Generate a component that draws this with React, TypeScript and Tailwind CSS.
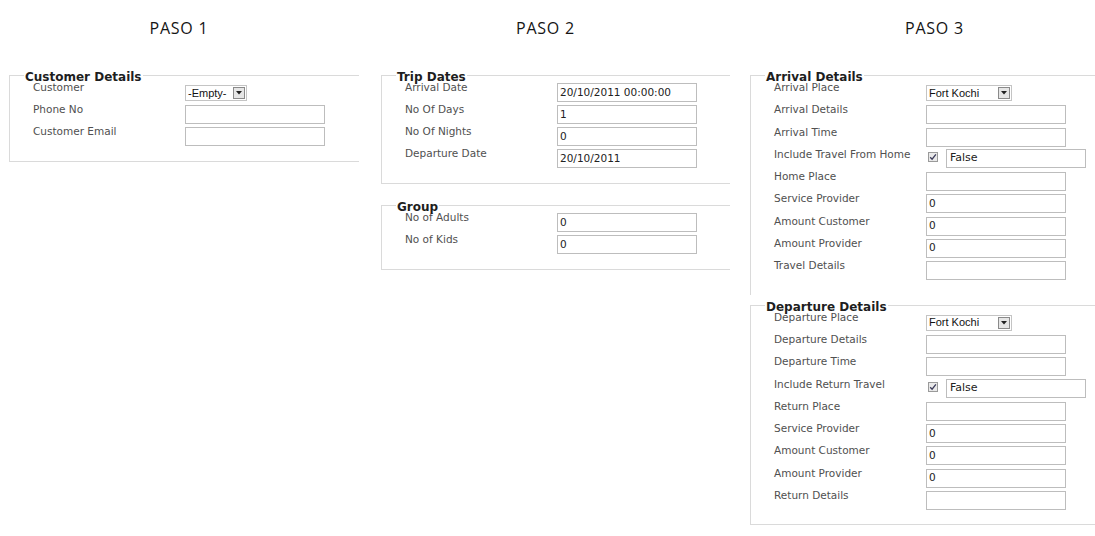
const UI = "font-['DejaVu_Sans',Verdana,sans-serif]";

function Field({
  legend,
  className,
  children,
}: {
  legend: string;
  className: string;
  children: React.ReactNode;
}) {
  return (
    <fieldset className={`border border-r-0 border-[#dadada] pl-[14px] ${className}`}>
      <legend className="px-[1px] text-[12px] leading-[15px] font-bold text-[#1e1e1e]">
        <span className="relative top-[2px]">{legend}</span>
      </legend>
      <div className="pl-[9px]">{children}</div>
    </fieldset>
  );
}

function Row({ label, h, children }: { label: string; h: string; children?: React.ReactNode }) {
  return (
    <div className={`flex items-start ${h}`}>
      <span className="-mt-[3px] w-[152px] shrink-0 text-[10.5px] leading-[14px] text-[#505050]">{label}</span>
      {children}
    </div>
  );
}

function TextBox({ value = "" }: { value?: string }) {
  return (
    <div className="flex h-[19px] w-[140px] items-center border border-[#bdbdbd] bg-white pl-[2px] text-[10.5px] text-[#222]">
      {value}
    </div>
  );
}

function Dropdown({ value, w }: { value: string; w: string }) {
  return (
    <div
      className={`mt-[2px] flex h-[16px] items-center border border-[#c4c4c4] bg-white pr-[1px] pl-[2px] font-['Liberation_Sans',Arial,sans-serif] text-[11px] text-[#111] ${w}`}
    >
      <span className="flex-1 leading-none">{value}</span>
      <span className="flex h-[12px] w-[12px] items-center justify-center border border-[#8a8a8a] bg-[#e6e6e6]">
        <svg width="6" height="4" viewBox="0 0 6 4">
          <path d="M0 0H6L3 3.5Z" fill="#222" />
        </svg>
      </span>
    </div>
  );
}

function CheckFalse() {
  return (
    <div className="-mt-[1px] flex items-start">
      <span className="mt-[3px] ml-[2px] flex h-[10px] w-[10px] items-center justify-center border border-[#9a9a9a] bg-[#e9e9e9]">
        <svg width="8" height="8" viewBox="0 0 8 8">
          <path d="M1.2 4.2L3.1 6.2L6.9 1.4" fill="none" stroke="#3b3b5a" strokeWidth="1.3" />
        </svg>
      </span>
      <div className="ml-[8px] flex h-[19px] w-[140px] items-center border border-[#bdbdbd] bg-white pl-[3px] text-[11px] text-[#222]">
        False
      </div>
    </div>
  );
}

function Heading({ text, pad }: { text: string; pad: string }) {
  return (
    <div
      className={`h-[68px] pt-[17px] text-center font-['Open_Sans',sans-serif] text-[16px] leading-[22px] tracking-[0.8px] text-[#151515] ${pad}`}
    >
      {text}
    </div>
  );
}

export default function App() {
  const r = "h-[22px]";
  const r3 = "h-[22.25px]";
  return (
    <div className={`flex h-[536px] w-[1095px] overflow-hidden bg-white ${UI}`}>
      {/* PASO 1 */}
      <div className="w-[365px] shrink-0">
        <Heading text="PASO 1" pad="pr-[7px]" />
        <Field legend="Customer Details" className="ml-[9px] w-[350px] pb-[12px]">
          <Row label="Customer" h={r}>
            <Dropdown value="-Empty-" w="w-[62px]" />
          </Row>
          <Row label="Phone No" h={r}>
            <TextBox />
          </Row>
          <Row label="Customer Email" h={r}>
            <TextBox />
          </Row>
        </Field>
      </div>

      {/* PASO 2 */}
      <div className="w-[370px] shrink-0">
        <Heading text="PASO 2" pad="pr-[9px]" />
        <Field legend="Trip Dates" className="ml-[16px] w-[349px] pb-[12px]">
          <Row label="Arrival Date" h={r}>
            <TextBox value="20/10/2011 00:00:00" />
          </Row>
          <Row label="No Of Days" h={r}>
            <TextBox value="1" />
          </Row>
          <Row label="No Of Nights" h={r}>
            <TextBox value="0" />
          </Row>
          <Row label="Departure Date" h={r}>
            <TextBox value="20/10/2011" />
          </Row>
        </Field>
        <Field legend="Group" className="mt-[14px] ml-[16px] w-[349px] pb-[12px]">
          <Row label="No of Adults" h={r}>
            <TextBox value="0" />
          </Row>
          <Row label="No of Kids" h={r}>
            <TextBox value="0" />
          </Row>
        </Field>
      </div>

      {/* PASO 3 */}
      <div className="w-[360px] shrink-0">
        <Heading text="PASO 3" pad="pl-[39px]" />
        <Field legend="Arrival Details" className="ml-[15px] w-[360px] border-b-0 pb-[12px]">
          <Row label="Arrival Place" h={r3}>
            <Dropdown value="Fort Kochi" w="w-[86px]" />
          </Row>
          <Row label="Arrival Details" h={r3}>
            <TextBox />
          </Row>
          <Row label="Arrival Time" h={r3}>
            <TextBox />
          </Row>
          <Row label="Include Travel From Home" h={r3}>
            <CheckFalse />
          </Row>
          <Row label="Home Place" h={r3}>
            <TextBox />
          </Row>
          <Row label="Service Provider" h={r3}>
            <TextBox value="0" />
          </Row>
          <Row label="Amount Customer" h={r3}>
            <TextBox value="0" />
          </Row>
          <Row label="Amount Provider" h={r3}>
            <TextBox value="0" />
          </Row>
          <Row label="Travel Details" h={r3}>
            <TextBox />
          </Row>
        </Field>
        <Field legend="Departure Details" className="mt-[2.5px] ml-[15px] w-[360px] pb-[11px]">
          <Row label="Departure Place" h={r3}>
            <Dropdown value="Fort Kochi" w="w-[86px]" />
          </Row>
          <Row label="Departure Details" h={r3}>
            <TextBox />
          </Row>
          <Row label="Departure Time" h={r3}>
            <TextBox />
          </Row>
          <Row label="Include Return Travel" h={r3}>
            <CheckFalse />
          </Row>
          <Row label="Return Place" h={r3}>
            <TextBox />
          </Row>
          <Row label="Service Provider" h={r3}>
            <TextBox value="0" />
          </Row>
          <Row label="Amount Customer" h={r3}>
            <TextBox value="0" />
          </Row>
          <Row label="Amount Provider" h={r3}>
            <TextBox value="0" />
          </Row>
          <Row label="Return Details" h={r3}>
            <TextBox />
          </Row>
        </Field>
      </div>
    </div>
  );
}
